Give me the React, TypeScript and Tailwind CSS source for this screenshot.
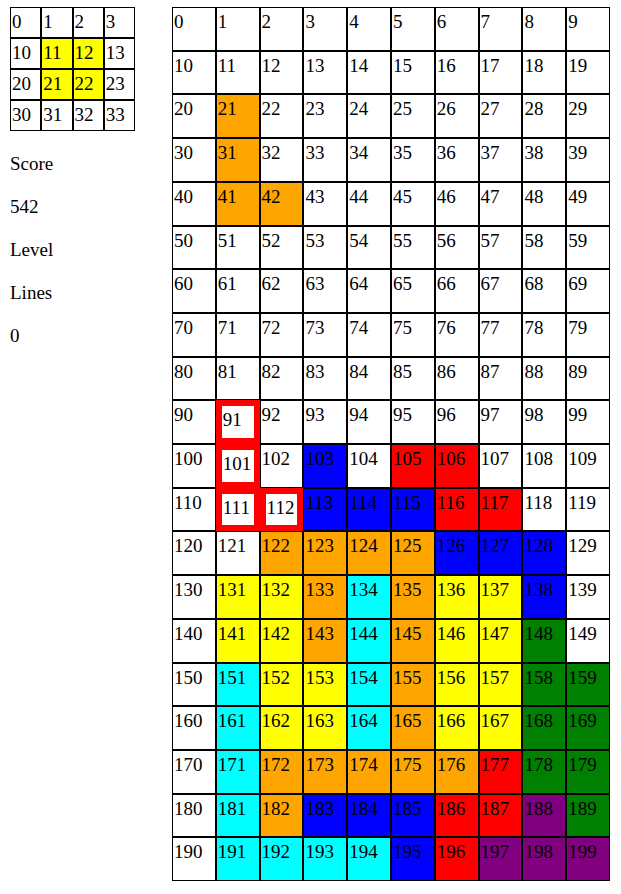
import React from 'react';

// board rows: '.' empty, 'X' falling piece, letters are locked blocks
const rows = [
  '..........',
  '..........',
  '.O........',
  '.O........',
  '.OO.......',
  '..........',
  '..........',
  '..........',
  '..........',
  '.X........',
  '.X.B.RR...',
  '.XXBBBRR..',
  '..OOOOBBB.',
  '.YYOCOYYB.',
  '.YYOCOYYG.',
  '.CYYCOYYGG',
  '.CYYCOYYGG',
  '.COOOOORGG',
  '.COBBBRRPG',
  '.CCCCBRPPP',
];

const colorClass: Record<string, string> = {
  '.': 'bg-white border-black',
  O: 'bg-[#ffa500] border-black',
  Y: 'bg-[#ffff00] border-black',
  R: 'bg-[#ff0000] border-black',
  B: 'bg-[#0000ff] border-black',
  C: 'bg-[#00ffff] border-black',
  G: 'bg-[#008000] border-black',
  P: 'bg-[#800080] border-black',
};

const preview = ['....', '.YY.', '.YY.', '....'];

const Cell: React.FC<{ n: number; kind: string }> = ({ n, kind }) => {
  if (kind === 'X') {
    return (
      <div className="border-[6px] border-[#ff0000] bg-white pl-[1px] pt-[3px] leading-[22px]">
        {n}
      </div>
    );
  }
  return (
    <div className={`border ${colorClass[kind]} pl-[1px] pt-[3px] leading-[22px]`}>
      {n}
    </div>
  );
};

const App: React.FC = () => {
  return (
    <div className="flex items-start pt-[7px] font-[family-name:'Liberation_Serif',serif] text-[19px] text-black bg-white min-h-screen">
      <div className="w-[172px] shrink-0 pl-[10px]">
        {/* next piece */}
        <div className="grid grid-cols-4 grid-rows-4 w-[125px] h-[124px]">
          {preview.flatMap((r, y) =>
            r.split('').map((k, x) => <Cell key={y * 10 + x} n={y * 10 + x} kind={k} />)
          )}
        </div>

        <div className="mt-[22px] flex flex-col gap-[21px] leading-[22px]">
          <div>Score</div>
          <div>542</div>
          <div>Level</div>
          <div>Lines</div>
          <div>0</div>
        </div>
      </div>

      {/* board */}
      <div className="grid grid-cols-10 grid-rows-20 w-[438px] h-[874px] shrink-0">
        {rows.flatMap((r, y) =>
          r.split('').map((k, x) => <Cell key={y * 10 + x} n={y * 10 + x} kind={k} />)
        )}
      </div>
    </div>
  );
};

export default App;
